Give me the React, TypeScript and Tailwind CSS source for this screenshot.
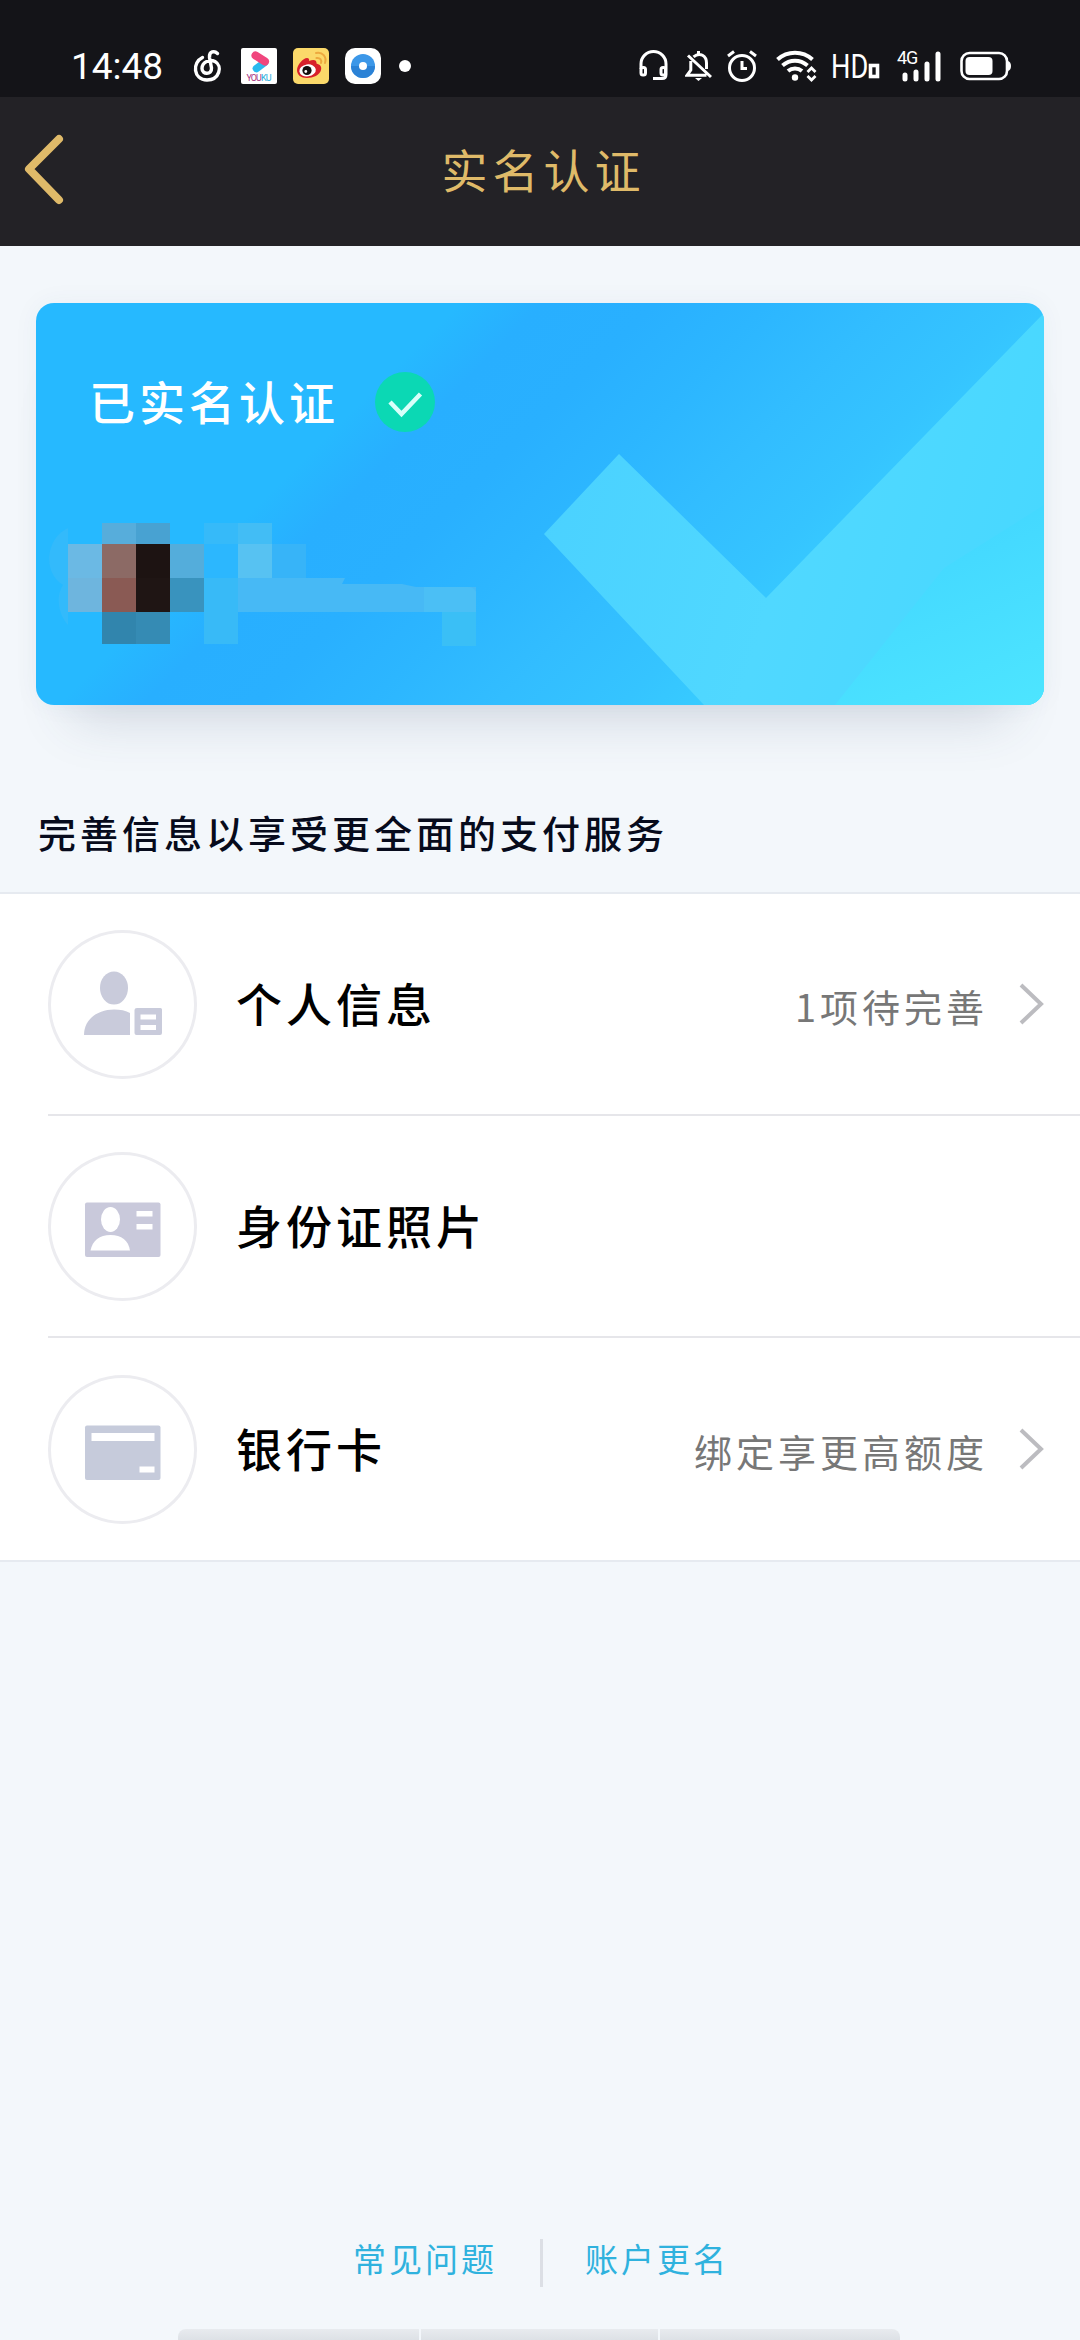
import React from 'react';

type RowProps = {
    icon: React.ReactNode;
    label: string;
    hint?: string;
    last?: boolean;
};

// blurred-out name and id number, x / y / w / h / colour
const mosaic: [number, number, number, number, string][] = [
    [102, 523, 34, 21, '#57addb'],
    [136, 523, 34, 21, '#48a2d2'],
    [204, 523, 34, 21, '#36baf9'],
    [238, 523, 34, 21, '#42bdf5'],
    [68, 544, 34, 34, '#6bb9e4'],
    [102, 544, 34, 34, '#8c6a65'],
    [136, 544, 34, 34, '#1d1312'],
    [170, 544, 34, 34, '#54addb'],
    [204, 544, 34, 34, '#2cb7fe'],
    [238, 544, 34, 34, '#57c2f2'],
    [272, 544, 34, 34, '#37b4f8'],
    [68, 578, 34, 34, '#6eb5de'],
    [102, 578, 34, 34, '#8a5a54'],
    [136, 578, 34, 34, '#1f1514'],
    [170, 578, 34, 34, '#3993be'],
    [204, 578, 34, 66, '#38baf7'],
    [102, 612, 34, 32, '#3185ad'],
    [136, 612, 34, 32, '#358bb4'],
    [442, 612, 34, 34, '#3abff6'],
];

const StatusBar: React.FC = () => (
    <div className="flex h-[97px] items-center justify-between bg-[#141418] pt-[35px] pr-[68px] pl-[71px] text-white">
        <div className="flex items-center">
            <span className="w-[122px] font-[Roboto,sans-serif] text-[37px] leading-none">14:48</span>
            {/* netease music */}
            <svg className="h-[34px] w-[30px]" viewBox="0 0 30 34" fill="none" stroke="white" strokeWidth="3.4" strokeLinecap="round">
                <path d="M9.500 8.500C-1 13.500 0 30.500 14 31 26.500 31 30 17 22 12.500 17 10 9 12.500 9 19.500 9 26 19 26 18.500 19L16.500 8.500C16 2 21.500 1.500 24.500 4.500" />
            </svg>
            {/* youku */}
            <svg className="ml-[18px] h-9 w-9" viewBox="0 0 36 36">
                <rect width="36" height="36" rx="2" fill="white" />
                <path d="M15.500 20.500 23.500 14.500" stroke="#29b9ee" strokeWidth="7.500" strokeLinecap="round" />
                <path d="M14.500 7.500 24 13.500" stroke="#f0457d" strokeWidth="8" strokeLinecap="round" />
                <text x="5.500" y="33" fontSize="9" fontFamily="Roboto, sans-serif" textLength="25">
                    <tspan fill="#a8337f">YOU</tspan>
                    <tspan fill="#2aaede">KU</tspan>
                </text>
            </svg>
            {/* weibo */}
            <svg className="ml-4 h-9 w-9" viewBox="0 0 36 36">
                <rect width="36" height="36" rx="5" fill="#fbd96a" />
                <path d="M4 22c0-5 6-12 10-12 2 0 2.500 1.500 2 3 4-1.600 8-1.500 7.500 2.500 3.500 1 5.500 3 4.500 6.500C27 27 20 30 14 30S4 27 4 22Z" fill="#d8202a" />
                <ellipse cx="14.500" cy="22.500" rx="8.300" ry="6" fill="white" transform="rotate(-8 14 22)" />
                <circle cx="14" cy="22.500" r="4.600" fill="#15100f" />
                <circle cx="12.800" cy="23.500" r="1.400" fill="white" />
                <path d="M23.500 10c3.500-.6 5.500 2 4.500 5M23 5c6.500-1.500 11 4 9 10" fill="none" stroke="#eda93f" strokeWidth="2" strokeLinecap="round" />
            </svg>
            <svg className="ml-4 h-9 w-9" viewBox="0 0 36 36">
                <rect width="36" height="36" rx="10" fill="white" />
                <circle cx="18" cy="18" r="12" fill="#3c97e8" />
                <path d="M6 18a12 12 0 0 0 24 0Z" fill="#2b82d6" />
                <circle cx="18" cy="18" r="4" fill="white" />
            </svg>
            <span className="ml-[18px] size-3 rounded-full bg-white" />
        </div>
        <div className="flex items-center">
            <svg className="h-[32px] w-[29px]" viewBox="0 0 29 32" fill="none" stroke="white" strokeWidth="3">
                <path d="M2 19v-5a12.500 12.500 0 0 1 25 0v10.500q0 4-4 4h-9" />
                <rect x="2" y="17.500" width="4.500" height="7.500" rx="2" />
                <rect x="22" y="17.500" width="4.500" height="7.500" rx="2" />
            </svg>
            <svg className="ml-[17px] h-[32px] w-[27px]" viewBox="0 0 27 32" fill="none" stroke="white" strokeWidth="3">
                <path d="M8.500 6.800C15 1.500 21.500 6 21.500 13v6M5.800 11v9L2 25.300h19.500M3 5.500l23 21.500M13.500 1v3" />
                <path d="M10 28h7l-3.500 3Z" fill="white" stroke="none" />
            </svg>
            <svg className="ml-[14px] h-[32px] w-[32px]" viewBox="0 0 32 32" fill="none" stroke="white" strokeWidth="3">
                <circle cx="16" cy="18" r="12.500" />
                <path d="M16 11v7.500h5M2 6l6-4.500M30 6l-6-4.500" />
            </svg>
            <svg className="ml-[18px] h-[32px] w-[41px]" viewBox="0 0 41 32" fill="none" stroke="white" strokeWidth="4">
                <path d="M1.500 9.500c10-9 25-9 35 0M6.500 15.500c7.500-6.500 17.500-6.500 25 0M12 21c4-3.500 10-3.500 14 0" />
                <circle cx="19" cy="27.500" r="3.200" fill="white" stroke="none" />
                <path d="m31.500 22 4-4 4 4M31.500 26l4 4 4-4" strokeWidth="2.800" />
            </svg>
            <span className="ml-[14px] w-[37px] origin-left scale-x-[0.8] font-[Roboto,sans-serif] text-[34px] leading-none whitespace-nowrap">
                HD
            </span>
            <svg className="h-[26px] w-[12px]" viewBox="0 0 12 26">
                <rect x="2.500" y="12.500" width="7" height="11" fill="none" stroke="white" strokeWidth="3.600" />
            </svg>
            <div className="ml-[17px] flex h-[34px] items-start">
                <span className="w-[10px] font-[Roboto,sans-serif] text-[18px] leading-[18px] tracking-[-1px] whitespace-nowrap">4G</span>
                <svg className="h-[34px] w-[37px] overflow-visible" viewBox="0 0 37 34">
                    <path d="M-2 26v4M9 23v7M20 15v15M31 5v25" stroke="white" strokeWidth="5" strokeLinecap="round" />
                </svg>
            </div>
            <svg className="ml-[16px] h-[30px] w-[52px]" viewBox="0 0 52 30">
                <rect x="1.500" y="2" width="45.500" height="26" rx="8" fill="none" stroke="white" strokeWidth="2.600" />
                <rect x="5.500" y="6" width="27" height="18" rx="4" fill="white" />
                <path d="M48 10q3 1 3 5t-3 5Z" fill="white" />
            </svg>
        </div>
    </div>
);

const PersonIcon: React.FC = () => (
    <svg className="size-[149px]" viewBox="0 0 149 149" fill="#c9cbdb">
        <ellipse cx="66" cy="58" rx="14" ry="16.500" />
        <path d="M36 105c0-16 14-25.500 30-25.500 6 0 12 1 16 3.500v22Z" />
        <path fillRule="evenodd" d="M89 78h23.500q1.500 0 1.500 1.500V103q0 2-2 2H88.500q-2 0-2-2V80q0-2 2.500-2Zm3.500 6.500v5h15.500v-5Zm0 10.500v5h15.500v-5Z" />
    </svg>
);

const IdCardIcon: React.FC = () => (
    <svg className="size-[149px]" viewBox="0 0 149 149">
        <rect x="37" y="50.500" width="75.500" height="54.500" rx="2" fill="#c9c9db" />
        <g fill="white">
            <ellipse cx="62.500" cy="67.500" rx="9.500" ry="12.500" />
            <path d="M42.500 98.500c2-10 9-15.500 20-15.500s18 5.500 19.500 15.500Z" />
            <path d="M88.500 59h16v5.500h-16zM88.500 72h16v5.500h-16z" />
        </g>
    </svg>
);

const BankCardIcon: React.FC = () => (
    <svg className="size-[149px]" viewBox="0 0 149 149">
        <rect x="37" y="50.500" width="75.500" height="54.500" rx="2" fill="#c6cbdb" />
        <path d="M43.500 58h63v8h-63zM91.500 91.500h15v6h-15z" fill="white" />
    </svg>
);

const Row: React.FC<RowProps> = ({ icon, label, hint, last }) => (
    <div className="bg-white pl-12">
        <div
            className={`flex h-[222px] items-center pr-[34px] ${last ? '' : 'border-b-2 border-[#e6e6ea]'}`}
        >
            <div className="size-[149px] shrink-0 rounded-full shadow-[inset_0_0_0_3px_#ececf0]">{icon}</div>
            <span className="mb-1 ml-[39px] text-[46px] leading-none font-medium tracking-[4px] text-black">{label}</span>
            {hint && (
                <>
                    <span className="mt-[3px] ml-auto text-[38px] leading-none tracking-[4px] text-[#777777]">{hint}</span>
                    <svg className="ml-[30px] h-[42px] w-[28px]" viewBox="0 0 28 42" fill="none" stroke="#bcbcc0" strokeWidth="4">
                        <path d="m3 2 20 19L3 40" />
                    </svg>
                </>
            )}
        </div>
    </div>
);

const VerifiedCard: React.FC = () => (
    <div className="relative mx-9 mt-[57px] h-[402px] rounded-[18px] bg-[linear-gradient(135deg,#26b9ff_0%,#26b9ff_30%,#28afff_36%,#29b0ff_44%,#2cb6ff_52%,#32bdff_61%,#35c4ff_70%,#3bd5ff_84%,#4de4ff_100%)] shadow-[0_50px_50px_-36px_rgba(60,80,110,0.18),0_0_26px_rgba(60,80,110,0.05)]">
        {/* watermark tick and the masked name share the card's canvas */}
        <svg className="absolute inset-0 h-full w-full rounded-[18px]" viewBox="36 303 1008 402">
            <defs>
                <linearGradient id="tick" x1="544" y1="450" x2="1044" y2="600" gradientUnits="userSpaceOnUse">
                    <stop offset="0" stopColor="#4ad1ff" />
                    <stop offset="0.500" stopColor="#50d8ff" />
                    <stop offset="1" stopColor="#47d8ff" />
                </linearGradient>
                <linearGradient id="corner" x1="960" y1="500" x2="1044" y2="705" gradientUnits="userSpaceOnUse">
                    <stop offset="0" stopColor="#42d6ff" />
                    <stop offset="1" stopColor="#4de5ff" />
                </linearGradient>
            </defs>
            <path d="M619 454 544 534 704 705H1044V313L766 598Z" fill="url(#tick)" />
            <path d="M1044 505 944 568 835 705H1044Z" fill="url(#corner)" />
            <path d="M68 528c-22 10-26 44-5 57-8 12-4 30 5 40Z" fill="#33bafb" />
            <path d="M238 578H345l-3 6h60l14 3h60v25H238Z" fill="#47b9f5" />
            <path d="M424 587h44q6 0 8 5v20h-52Z" fill="#4bbff5" />
            {mosaic.map(([x, y, w, h, fill]) => (
                <rect key={`${x}-${y}`} x={x} y={y} width={w} height={h} fill={fill} shapeRendering="crispEdges" />
            ))}
        </svg>
        <div className="relative flex items-center pt-[69px] pl-[53px]">
            <span className="mb-1 text-[46px] leading-none font-medium tracking-[4px] text-white">已实名认证</span>
            <svg className="ml-[36px] size-[60px]" viewBox="0 0 60 60">
                <circle cx="30" cy="30" r="30" fill="#0bd8b4" />
                <path d="m15 30 11.500 12 19-20" fill="none" stroke="#d8fffa" strokeWidth="4.500" />
            </svg>
        </div>
    </div>
);

const App: React.FC = () => {
    return (
        <div className="flex h-[2340px] w-[1080px] flex-col overflow-hidden bg-[#f3f7fb] font-['Noto_Sans_CJK_SC',sans-serif]">
            <StatusBar />

            <header className="grid h-[149px] grid-cols-[1fr_auto_1fr] items-center bg-[#232226]">
                <svg className="mb-[3px] ml-[22px] h-[74px] w-[46px]" viewBox="0 0 46 74" fill="none" stroke="#dfba69" strokeWidth="8" strokeLinecap="round" strokeLinejoin="round">
                    <path d="M37 6 7 36 37 67" />
                </svg>
                <h1 className="mb-[8px] pl-[7px] text-[46px] leading-none tracking-[5px] text-[#dfba69]">实名认证</h1>
                <span />
            </header>

            <VerifiedCard />

            <p className="mt-[108px] pl-[38px] text-[38px] leading-none font-medium tracking-[4px] text-[#070b1c]">
                完善信息以享受更全面的支付服务
            </p>

            <div className="mt-[41px] border-y-2 border-[#e6eaf0]">
                <Row
                    icon={<PersonIcon />}
                    label="个人信息"
                    hint="1项待完善"
                />
                <Row
                    icon={<IdCardIcon />}
                    label="身份证照片"
                />
                <Row
                    icon={<BankCardIcon />}
                    label="银行卡"
                    hint="绑定享更高额度"
                    last
                />
            </div>

            <div className="mt-auto mb-[42px] flex h-[48px] items-center text-[33px] leading-none tracking-[3px] text-[#2fb2de]">
                <a className="mb-[10px] ml-[353px]">常见问题</a>
                <span className="ml-[43px] h-full w-[3px] bg-[#dcdfe5]" />
                <a className="mb-[10px] ml-[42px]">账户更名</a>
            </div>

            {/* top edge of the bottom sheet */}
            <div className="mr-[180px] ml-[178px] flex h-[11px] shrink-0 gap-[2px] overflow-hidden rounded-t-lg">
                <span className="w-[241px] bg-linear-to-b from-[#e8ebef] to-[#dde1e6]" />
                <span className="w-[237px] bg-linear-to-b from-[#e8ebef] to-[#dde1e6]" />
                <span className="flex-1 bg-linear-to-b from-[#e8ebef] to-[#dde1e6]" />
            </div>
        </div>
    );
};

export default App;
